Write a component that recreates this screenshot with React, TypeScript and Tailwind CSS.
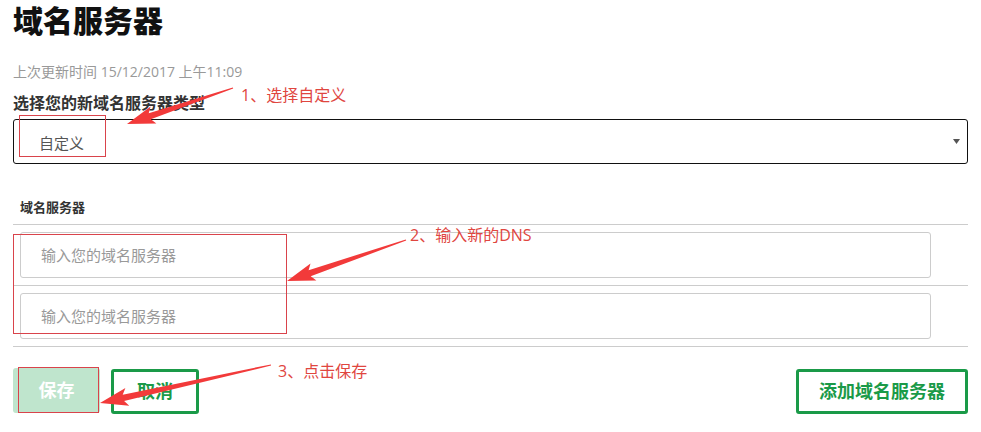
import React from "react";

const FONT = "font-['Open_Sans','Noto_Sans_CJK_SC',sans-serif]";

// tapered annotation arrow, points computed from tail -> tip
const arrowPoints = (x1: number, y1: number, x2: number, y2: number) => {
  const dx = x2 - x1;
  const dy = y2 - y1;
  const len = Math.hypot(dx, dy);
  const ux = dx / len;
  const uy = dy / len;
  const nx = -uy;
  const ny = ux;
  const head = 24;
  const bx = x2 - ux * head;
  const by = y2 - uy * head;
  const wx = x2 - ux * (head + 4);
  const wy = y2 - uy * (head + 4);
  const pts = [
    [x1 + nx * 0.6, y1 + ny * 0.6],
    [bx + nx * 3.2, by + ny * 3.2],
    [wx + nx * 9, wy + ny * 9],
    [x2, y2],
    [wx - nx * 9, wy - ny * 9],
    [bx - nx * 3.2, by - ny * 3.2],
    [x1 - nx * 0.6, y1 - ny * 0.6],
  ];
  return pts.map((p) => `${p[0].toFixed(1)},${p[1].toFixed(1)}`).join(" ");
};

const Annotations = () => (
  <>
    <svg className="absolute inset-0 pointer-events-none" width={981} height={432}>
      <rect x={19.5} y={115.5} width={86} height={41} fill="none" stroke="#d9434b" strokeWidth={1} />
      <rect x={13.5} y={234.5} width={273} height={99} fill="none" stroke="#d9434b" strokeWidth={1} />
      <rect x={18.5} y={367.5} width={80} height={45} fill="none" stroke="#d9434b" strokeWidth={1} />
      <polygon points={arrowPoints(233, 88, 127, 124)} fill="#f23a3a" />
      <polygon points={arrowPoints(406, 240, 287, 281)} fill="#f23a3a" />
      <polygon points={arrowPoints(271, 365, 100, 403)} fill="#f23a3a" />
    </svg>
    <span className="absolute left-[241px] top-[85px] text-[16px] leading-[20px] text-[#e0463f]">1、选择自定义</span>
    <span className="absolute left-[410px] top-[225px] text-[16px] leading-[20px] text-[#e0463f]">2、输入新的DNS</span>
    <span className="absolute left-[278px] top-[361px] text-[16px] leading-[20px] text-[#e0463f]">3、点击保存</span>
  </>
);

const ServerRow = () => (
  <div className="py-[7px] border-b border-[#cccccc]">
    <div className="ml-[7px] w-[911px] h-[46px] border border-[#cccccc] rounded-[3px] flex items-center pl-[20px] text-[15px] text-[#999999]">
      输入您的域名服务器
    </div>
  </div>
);

export default function App() {
  return (
    <div className={`relative w-[981px] h-[432px] bg-white overflow-hidden ${FONT}`}>
      <div className="pl-[13px] w-[968px]">
        <h1 className="text-[30px] leading-[40px] pt-[1px] font-black text-[#111111]">域名服务器</h1>
        <p className="mt-[21px] text-[14px] leading-[20px] text-[#999999]">上次更新时间 15/12/2017 上午11:09</p>
        <div className="mt-[11px] text-[16px] leading-[20px] font-bold text-[#333333]">选择您的新域名服务器类型</div>
        <div className="mt-[6px] h-[45px] border border-[#111111] rounded-[3px] flex items-center justify-between pl-[25px] pr-[7px]">
          <span className="text-[15px] text-[#555555] mt-[3px]">自定义</span>
          <svg width="7" height="5" viewBox="0 0 7 5" className="mb-[1px]">
            <polygon points="0,0 7,0 3.5,5" fill="#555555" />
          </svg>
        </div>
        <div className="mt-[34px] h-[27px] pl-[7px] border-b border-[#cccccc] text-[13px] leading-[18px] font-bold text-[#333333]">
          域名服务器
        </div>
        <ServerRow />
        <ServerRow />
        <div className="mt-[21px] flex items-start">
          <button className="w-[87px] h-[45px] rounded-[3px] bg-[#bfe5cd] text-white text-[18px] font-bold">保存</button>
          <button className="ml-[11px] mt-[1px] w-[88px] h-[45px] rounded-[3px] border-[3px] border-[#1a9a48] text-[#1a9a48] text-[18px] font-bold">
            取消
          </button>
          <button className="ml-auto mt-[1px] w-[172px] h-[45px] rounded-[3px] border-[3px] border-[#1a9a48] text-[#1a9a48] text-[18px] font-bold">
            添加域名服务器
          </button>
        </div>
      </div>
      <Annotations />
    </div>
  );
}
